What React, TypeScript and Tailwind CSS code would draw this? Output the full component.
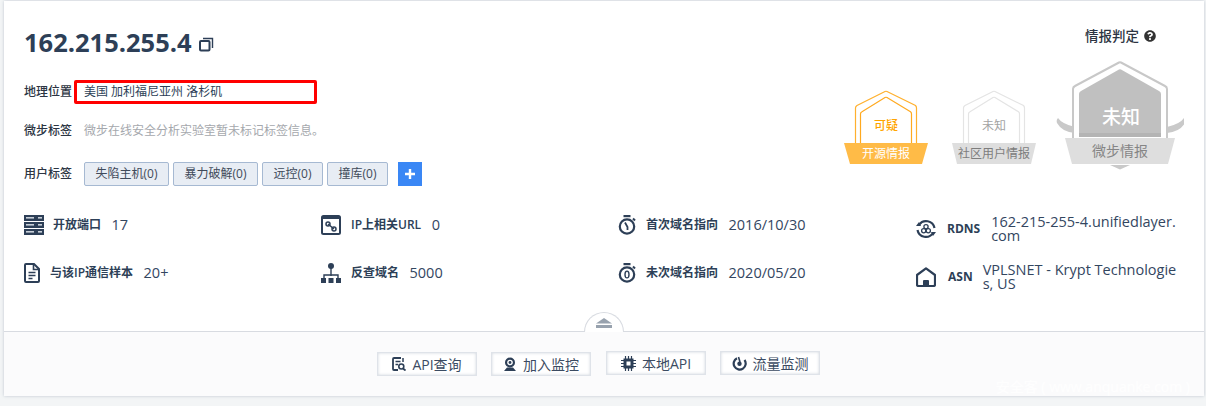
import React from "react";
import { FaQuestionCircle } from "react-icons/fa";

const font = { fontFamily: '"Open Sans","Noto Sans CJK SC",sans-serif' };
const C = "#2d3f57";

function Svg({ children, w = 20, h = 20, vb }: { children: React.ReactNode; w?: number; h?: number; vb?: string }) {
  return (
    <svg width={w} height={h} viewBox={vb ?? `0 0 ${w} ${h}`} className="shrink-0">
      {children}
    </svg>
  );
}

const ServerIcon = () => (
  <Svg>
    {[0, 7, 14].map((y) => (
      <g key={y}>
        <rect x="0" y={y} width="20" height="6" fill={C} />
        <rect x="2" y={y + 2} width="8" height="1.6" fill="#c9d0d9" />
        <rect x="14" y={y + 2} width="4" height="1.6" fill="#c9d0d9" />
      </g>
    ))}
  </Svg>
);
const LinkIcon = () => (
  <Svg>
    <rect x="1" y="1" width="18" height="18" rx="1.5" fill="none" stroke={C} strokeWidth="2" />
    <rect x="1" y="1" width="18" height="3" fill={C} />
    <path d="M7 9l6 5" stroke={C} strokeWidth="1.6" />
    <circle cx="7" cy="9" r="2" fill="none" stroke={C} strokeWidth="1.5" />
    <circle cx="13" cy="14" r="2" fill="none" stroke={C} strokeWidth="1.5" />
  </Svg>
);
const DocIcon = () => (
  <Svg w={16} h={20}>
    <path d="M2 1h8l5 5v12a1 1 0 0 1-1 1H2a1 1 0 0 1-1-1V2a1 1 0 0 1 1-1z" fill="none" stroke={C} strokeWidth="2" />
    <path d="M9.5 1v5.5H15" fill="none" stroke={C} strokeWidth="1.6" />
    <path d="M4.5 9.5h7M4.5 12.5h7M4.5 15.5h4" stroke={C} strokeWidth="1.6" />
  </Svg>
);
const TreeIcon = () => (
  <Svg>
    <circle cx="10" cy="3" r="3" fill={C} />
    <path d="M10 5v8M3 15v-3h14v3" fill="none" stroke={C} strokeWidth="1.4" />
    <rect x="0" y="15" width="5" height="5" fill={C} />
    <rect x="7.5" y="15" width="5" height="5" fill={C} />
    <rect x="15" y="15" width="5" height="5" fill={C} />
  </Svg>
);
const TimerIcon = ({ zero }: { zero?: boolean }) => (
  <Svg w={18} h={20}>
    <rect x="5.5" y="0" width="7" height="2.2" fill={C} />
    <circle cx="9" cy="11.5" r="7.2" fill="none" stroke={C} strokeWidth="2.2" />
    <path d="M15 3.5l2 2" stroke={C} strokeWidth="2" />
    {zero ? (
      <ellipse cx="9" cy="11.5" rx="2" ry="3.4" fill="none" stroke={C} strokeWidth="1.4" />
    ) : (
      <path d="M7 7.5l2.5 4.5v3" fill="none" stroke={C} strokeWidth="1.8" />
    )}
  </Svg>
);
const RdnsIcon = () => (
  <Svg>
    <path d="M3 6A8.5 8.5 0 0 1 18.5 9" fill="none" stroke={C} strokeWidth="2.2" />
    <path d="M1.5 11A8.5 8.5 0 0 0 17 14" fill="none" stroke={C} strokeWidth="2.2" />
    <path d="M0 7h5L3 3zM20 13h-5l2 4z" fill={C} />
    <circle cx="10" cy="7.8" r="2.1" fill="none" stroke={C} strokeWidth="1.3" />
    <circle cx="7.7" cy="11.8" r="2.1" fill="none" stroke={C} strokeWidth="1.3" />
    <circle cx="12.3" cy="11.8" r="2.1" fill="none" stroke={C} strokeWidth="1.3" />
  </Svg>
);
const HomeIcon = () => (
  <Svg>
    <path d="M10 1.3L19 8v9.5a1.5 1.5 0 0 1-1.5 1.5h-15A1.5 1.5 0 0 1 1 17.5V8z" fill="none" stroke={C} strokeWidth="2.2" strokeLinejoin="round" />
    <path d="M7 19v-5a1 1 0 0 1 1-1h4a1 1 0 0 1 1 1v5z" fill={C} />
  </Svg>
);

const BIcon = {
  search: (
    <Svg w={14} h={14}>
      <path d="M9 1H2a1 1 0 0 0-1 1v10a1 1 0 0 0 1 1h4" fill="none" stroke={C} strokeWidth="1.8" />
      <path d="M11 1v4M3.5 4.5h5M3.5 7.5h2.5" stroke={C} strokeWidth="1.5" />
      <circle cx="9.3" cy="9.5" r="2.5" fill="none" stroke={C} strokeWidth="1.6" />
      <path d="M11 11.5l2.5 2" stroke={C} strokeWidth="1.8" />
    </Svg>
  ),
  cam: (
    <Svg w={14} h={14}>
      <circle cx="7" cy="5.5" r="5" fill={C} />
      <circle cx="7" cy="5.5" r="2.8" fill="#fff" />
      <circle cx="7" cy="5.5" r="1.4" fill={C} />
      <path d="M4 10.5L1 14h12l-3-3.5z" fill={C} />
    </Svg>
  ),
  chip: (
    <Svg w={15} h={15}>
      <path d="M4.5 0v15M7.5 0v15M10.5 0v15M0 4.5h15M0 7.5h15M0 10.5h15" stroke={C} strokeWidth="1.2" />
      <rect x="2.5" y="2.5" width="10" height="10" fill={C} />
      <rect x="5.5" y="5.5" width="4" height="4" fill="#fff" />
    </Svg>
  ),
  flow: (
    <Svg w={15} h={15}>
      <path d="M5 2.2A6 6 0 1 0 12.5 4" fill="none" stroke={C} strokeWidth="2.2" />
      <circle cx="7.5" cy="7.8" r="2.2" fill={C} />
      <path d="M6.5 1L8 6" stroke={C} strokeWidth="1.6" />
    </Svg>
  ),
};

function Row({ label, children, className = "" }: { label: string; children: React.ReactNode; className?: string }) {
  return (
    <div className={`flex items-center h-6 ${className}`}>
      <span className="w-[50px] text-[12px] font-medium text-[#2c3442] shrink-0 whitespace-nowrap">{label}</span>
      {children}
    </div>
  );
}

function Tag({ children, w }: { children: React.ReactNode; w: string }) {
  return (
    <span className={`${w} h-6 flex items-center justify-center bg-[#e8edf4] border border-[#a6b9d2] rounded-[2px] text-[12px] text-[#3f4a5a]`}>
      {children}
    </span>
  );
}

function Stat({ icon, label, value, iconGap = "mr-[10px]" }: { icon: React.ReactNode; label: string; value: React.ReactNode; iconGap?: string }) {
  return (
    <div className="flex items-center h-[26px]">
      <span className={`${iconGap} flex`}>{icon}</span>
      <span className="text-[12px] font-semibold text-[#2d3f57] whitespace-nowrap">{label}</span>
      <span className="ml-[10.5px] -mt-px text-[14.5px] leading-[14px] text-[#33465f]">{value}</span>
    </div>
  );
}

function FootBtn({ icon, label, up }: { icon: React.ReactNode; label: string; up?: boolean }) {
  return (
    <button className={`w-[100px] h-6 flex items-center justify-center gap-[6px] bg-white border border-[#dfe3e9] shadow-[inset_0_0_3px_rgba(120,135,155,0.35)] text-[14px] text-[#3b4b62] ${up ? "-mt-[2px]" : ""}`}>
      {icon}
      {label}
    </button>
  );
}

function Badges() {
  return (
    <svg width="340" height="112" viewBox="844 60 340 112" className="block" style={font}>
      {/* open source */}
      <path d="M855.5 143V108q0-1.5 1.5-2.5L885 91.5q1-.5 2 0l28.5 14q1 1 1 2.5v35" fill="none" stroke="#ffb02e" strokeWidth="1.2" />
      <path d="M860.5 143V114q0-1.5 1.5-2.2L885 97.5q1-.5 2 0l23.5 14.3q1 .7 1 2.2v29" fill="none" stroke="#ffa91f" strokeWidth="1.2" />
      <path d="M844 143h84l-6 21h-72z" fill="#ffbb47" />
      <text x="886" y="130" textAnchor="middle" fontSize="12" fontWeight="500" fill="#ffa500">可疑</text>
      <text x="886" y="158" textAnchor="middle" fontSize="12" fill="#fff">开源情报</text>
      {/* community */}
      <path d="M963.5 143V108q0-1.5 1.5-2.5L993 91.5q1-.5 2 0l28.5 14q1 1 1 2.5v35" fill="none" stroke="#e4e4e4" strokeWidth="1.2" />
      <path d="M968.5 143V114q0-1.5 1.5-2.2L993 97.5q1-.5 2 0l23.5 14.3q1 .7 1 2.2v29" fill="none" stroke="#e4e4e4" strokeWidth="1.2" />
      <path d="M952 143h84l-5 21h-74z" fill="#dedede" />
      <text x="994" y="130" textAnchor="middle" fontSize="12" fill="#a3a3a3">未知</text>
      <text x="994" y="158" textAnchor="middle" fontSize="12" fill="#7d7d7d">社区用户情报</text>
      {/* main */}
      <path d="M1058 118q4 6 17 9v6q-13-1-18-10q-1-3 1-5zM1184 118q-4 6-17 9v6q13-1 18-10q1-3-1-5z" fill="#c9c9c9" />
      <path d="M1073 138V89q0-2 2-3l44-23.5q1-.5 2 0l44 23.5q2 1 2 3v49" fill="#fff" stroke="#c8c8c8" strokeWidth="2" />
      <path d="M1079 137V94q0-2 2-3l38-21.5q1-.5 2 0l38 21.5q2 1 2 3v43z" fill="#c0c0c0" />
      <rect x="1079" y="133" width="82" height="4" fill="#b4b4b4" />
      <path d="M1065 138h110l-7 26h-96z" fill="#dedede" />
      <path d="M1110 165h20l-10 4.5z" fill="#c9c9c9" />
      <text x="1121" y="124" textAnchor="middle" fontSize="19" fontWeight="500" fill="#fff">未知</text>
      <text x="1120" y="156" textAnchor="middle" fontSize="14" fill="#858585">微步情报</text>
    </svg>
  );
}

export default function App() {
  return (
    <div className="relative w-[1206px] h-[406px] overflow-hidden bg-[#f3f5f6] pt-px pl-1" style={font}>
      <div className="relative w-[1200px] h-[395px] bg-white shadow-[0_0_3px_rgba(130,145,165,0.45)] flex flex-col">
        <div className="flex-1 px-5">
          <div className="flex justify-between">
            <div>
              <div className="flex items-center gap-[7px] h-8 mt-[25px]">
                <h1 className="text-[25.5px] font-bold text-[#2d3f57] leading-8">162.215.255.4</h1>
                <svg width="15" height="15" viewBox="0 0 15 15" className="mt-[5px]">
                  <rect x="1" y="4" width="9.5" height="9.5" rx="1" fill="none" stroke="#2d3f57" strokeWidth="2" />
                  <path d="M4 1.5h9.5V11" fill="none" stroke="#2d3f57" strokeWidth="1.4" />
                </svg>
              </div>
              <Row label="地理位置" className="mt-[22px]">
                <div className="w-[243px] h-6 border-[3px] border-[#ff0000] rounded-[2px] pl-[7px] flex items-center text-[12px] text-[#2d3f57] whitespace-pre">
                  美国 加利福尼亚州 洛杉矶
                </div>
              </Row>
              <Row label="微步标签" className="mt-[15px]">
                <span className="ml-[10px] text-[12px] text-[#a5a8ad]">微步在线安全分析实验室暂未标记标签信息。</span>
              </Row>
              <Row label="用户标签" className="mt-[19px]">
                <div className="ml-[10px] flex items-center gap-1">
                  <Tag w="w-[85px]">失陷主机(0)</Tag>
                  <Tag w="w-[85px]">暴力破解(0)</Tag>
                  <Tag w="w-[61px]">远控(0)</Tag>
                  <Tag w="w-[61px]">撞库(0)</Tag>
                  <button className="ml-[6px] w-6 h-6 bg-[#3a87f5] text-white flex items-center justify-center">
                    <svg width="10" height="10" viewBox="0 0 10 10"><path d="M5 0v10M0 5h10" stroke="#fff" strokeWidth="2.4" /></svg>
                  </button>
                </div>
              </Row>
            </div>
            <div className="flex flex-col items-end">
              <div className="flex items-center gap-[5px] mt-[26px] mr-[28px] h-[18px]">
                <span className="text-[13.5px] font-medium text-[#2c3442]">情报判定</span>
                <FaQuestionCircle className="w-3 h-3 text-[#333]" />
              </div>
              <div className="mt-[15px]">
                <Badges />
              </div>
            </div>
          </div>

          <div className="grid grid-cols-[297px_297px_298px_1fr] gap-y-[18px] mt-[26px]">
            <Stat icon={<ServerIcon />} label="开放端口" value="17" iconGap="mr-[9px]" />
            <Stat icon={<LinkIcon />} label="IP上相关URL" value="0" />
            <Stat icon={<TimerIcon />} label="首次域名指向" value="2016/10/30" />
            <div className="flex items-center h-[26px] mt-1">
              <span className="flex mr-[11px]"><RdnsIcon /></span>
              <span className="text-[12px] font-bold text-[#2d3f57]">RDNS</span>
              <span className="ml-[11px] w-[190px] shrink-0 text-[14.5px] leading-[14px] text-[#33465f] break-all">162-215-255-4.unifiedlayer.com</span>
            </div>
            <Stat icon={<DocIcon />} label="与该IP通信样本" value="20+" />
            <Stat icon={<TreeIcon />} label="反查域名" value="5000" />
            <Stat icon={<TimerIcon zero />} label="未次域名指向" value="2020/05/20" />
            <div className="flex items-center h-[26px] mt-1">
              <span className="flex mr-[12px]"><HomeIcon /></span>
              <span className="text-[12px] font-bold text-[#2d3f57]">ASN</span>
              <span className="ml-[10px] w-[199px] shrink-0 text-[14.5px] leading-[14px] text-[#33465f] break-all">VPLSNET - Krypt Technologies, US</span>
            </div>
          </div>
        </div>

        <div className="relative h-[65px] bg-[#fbfbfc] border-t border-[#d8dbe1] flex items-center gap-[14px] shrink-0 pl-[373px]">
          <FootBtn icon={BIcon.search} label="API查询" />
          <FootBtn icon={BIcon.cam} label="加入监控" />
          <span className="w-px -mx-[14px] ml-0" />
          <FootBtn icon={BIcon.chip} label="本地API" up />
          <FootBtn icon={BIcon.flow} label="流量监测" up />
          <div className="absolute left-[580px] -top-[20px] w-10 h-5 bg-white border border-b-0 border-[#d8dbe1] rounded-t-[20px] flex flex-col items-center pt-[5px]">
            <svg width="16" height="11" viewBox="0 0 16 11"><path d="M8 0l8 5.5H0z" fill="#98a2ae" /><rect y="7" width="16" height="3" fill="#98a2ae" /></svg>
          </div>
          <span className="absolute right-[14px] bottom-0 text-[14px] leading-[18px] text-white/80 whitespace-pre">安全客 ( www.anquanke.com )</span>
        </div>
      </div>
    </div>
  );
}
